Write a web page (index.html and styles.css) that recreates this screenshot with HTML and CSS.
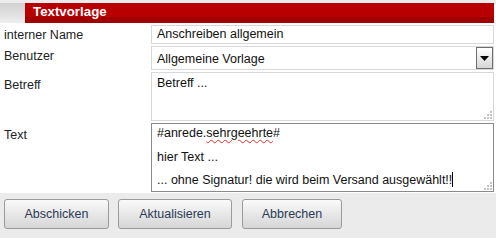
FILE: index.html
```html
<!DOCTYPE html>
<html lang="de">
<head>
<meta charset="utf-8">
<title>Textvorlage</title>
<link rel="stylesheet" href="styles.css">
</head>
<body>
<div class="page">
  <div class="topbar">
    <div class="tabstub"></div>
    <div class="title"><span>Textvorlage</span></div>
    <div class="tabend"></div>
  </div>
  <div class="form">
    <div class="row row-name">
      <div class="label">interner Name</div>
      <div class="field"><div class="input">Anschreiben allgemein</div></div>
    </div>
    <div class="row row-user">
      <div class="label">Benutzer</div>
      <div class="field">
        <div class="select">
          <span class="select-text">Allgemeine Vorlage</span>
          <span class="select-btn"><svg width="9" height="5" viewBox="0 0 9 5"><path d="M0 0H9L4.5 5Z" fill="#000"/></svg></span>
        </div>
      </div>
    </div>
    <div class="row row-subject">
      <div class="label">Betreff</div>
      <div class="field">
        <div class="textarea area-subject">Betreff ...
          <svg class="grip" width="8" height="8" viewBox="0 0 8 8"><g fill="#c4c4c4"><rect x="6" y="0" width="2" height="2"/><rect x="3" y="3" width="2" height="2"/><rect x="6" y="3" width="2" height="2"/><rect x="0" y="6" width="2" height="2"/><rect x="3" y="6" width="2" height="2"/><rect x="6" y="6" width="2" height="2"/></g></svg>
        </div>
      </div>
    </div>
    <div class="row row-text">
      <div class="label">Text</div>
      <div class="field">
        <div class="textarea area-text">
          <div class="line">#anrede.<span class="spell">sehrgeehrte</span>#</div>
          <div class="line">hier Text ...</div>
          <div class="line">... ohne Signatur! die wird beim Versand ausgewählt!!<span class="caret"></span></div>
          <svg class="grip" width="8" height="8" viewBox="0 0 8 8"><g fill="#c4c4c4"><rect x="6" y="0" width="2" height="2"/><rect x="3" y="3" width="2" height="2"/><rect x="6" y="3" width="2" height="2"/><rect x="0" y="6" width="2" height="2"/><rect x="3" y="6" width="2" height="2"/><rect x="6" y="6" width="2" height="2"/></g></svg>
        </div>
      </div>
    </div>
  </div>
  <div class="footer">
    <button class="btn btn-send">Abschicken</button>
    <button class="btn btn-update">Aktualisieren</button>
    <button class="btn btn-cancel">Abbrechen</button>
  </div>
</div>
</body>
</html>
```

FILE: styles.css
```css
html, body {
  margin: 0;
  padding: 0;
  background: #ffffff;
}
body {
  font-family: "Liberation Sans", Arial, sans-serif;
  font-size: 12.5px;
  color: #1e1e1e;
}
.page {
  width: 496px;
  height: 238px;
  display: flex;
  flex-direction: column;
  overflow: hidden;
}
.topbar {
  display: flex;
  height: 23px;
  padding-top: 3px;
  box-sizing: border-box;
  background: #ececec;
}
.tabstub {
  width: 25px;
  background: linear-gradient(#d2d2d2, #dcdcdc 40%, #eeeeee);
}
.title {
  flex: 1;
  background: linear-gradient(#b90000 0, #b90000 70%, #a00000 70%, #a00000 100%);
  color: #ffffff;
  font-weight: bold;
  font-size: 13.3px;
  display: flex;
  align-items: center;
  padding-left: 8px;
  padding-bottom: 3px;
  box-sizing: border-box;
}
.tabend {
  width: 2px;
  background: #ffffff;
}
.form {
  display: flex;
  flex-direction: column;
  padding-top: 2px;
}
.row {
  display: flex;
}
.label {
  width: 151px;
  padding-left: 4px;
  box-sizing: border-box;
  color: #222;
}
.field {
  width: 343px;
}
.row-name { height: 21px; }
.row-name .label { padding-top: 3px; }
.row-user { height: 26px; }
.row-user .label { padding-top: 3px; }
.row-subject { height: 51px; }
.row-subject .label { padding-top: 6px; }
.row-text { height: 69px; }
.row-text .label { padding-top: 5px; }

.input {
  height: 19px;
  border: 1px solid #d8d8d8;
  box-sizing: border-box;
  padding: 1px 0 0 5px;
  color: #111;
}
.select {
  height: 24px;
  border: 1px solid #d8d8d8;
  box-sizing: border-box;
  display: flex;
  align-items: center;
  justify-content: space-between;
  padding-left: 5px;
  color: #111;
}
.select-text { padding-top: 1px; }
.select-btn {
  width: 17px;
  height: 22px;
  border: 1px solid #6e6e6e;
  box-sizing: border-box;
  background: linear-gradient(#ffffff, #d6d6d6);
  display: flex;
  align-items: center;
  justify-content: center;
}
.textarea {
  position: relative;
  box-sizing: border-box;
  color: #111;
}
.area-subject {
  height: 49px;
  border: 1px solid #d8d8d8;
  padding: 3px 0 0 5px;
}
.area-text {
  height: 69px;
  border: 1px solid #8a8a8a;
  padding: 1px 0 0 5px;
}
.line {
  height: 23.5px;
  line-height: 17px;
}
.spell {
  text-decoration: underline wavy #e03030;
  text-decoration-thickness: 1px;
  text-underline-offset: 2px;
}
.caret {
  display: inline-block;
  width: 1px;
  height: 15px;
  background: #000;
  vertical-align: -3px;
}
.grip {
  position: absolute;
  right: 1px;
  bottom: 1px;
}
.footer {
  flex: 1;
  margin-top: 1px;
  background: #ebebeb;
  display: flex;
  gap: 9px;
  padding: 6px 0 0 4px;
  align-items: flex-start;
}
.btn {
  height: 30px;
  border: 1px solid #9a9a9a;
  border-radius: 3px;
  background: linear-gradient(#fafafa, #e4e4e4 60%, #d6d6d6);
  font-family: "Liberation Sans", Arial, sans-serif;
  font-size: 12.5px;
  color: #2b3a55;
  padding: 0;
  margin: 0;
}
.btn-send { width: 105px; }
.btn-update { width: 114px; }
.btn-cancel { width: 100px; margin-left: 1px; }
```
